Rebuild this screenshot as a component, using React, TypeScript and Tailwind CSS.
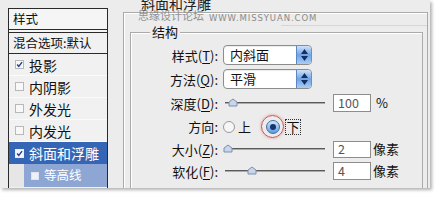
const FONT = { fontFamily: '"Noto Sans CJK SC", "Noto Sans", sans-serif' };

const CheckBox = ({ checked, light }: { checked?: boolean; light?: boolean }) => (
  <span
    className={
      "w-[9px] h-[9px] shrink-0 border flex items-center justify-center " +
      (light ? "border-[#e8eef8] bg-[#f4f6fb]" : "border-[#b8b8b8] bg-[#f8f8f8]")
    }
  >
    {checked && (
      <svg width="9" height="9" viewBox="0 0 9 9">
        <path d="M1.5 4.5 L3.6 7 L7.8 1.5" stroke="#1d3f8f" strokeWidth="1.8" fill="none" />
      </svg>
    )}
  </span>
);

const ListRow = ({ label, checked }: { label: string; checked?: boolean }) => (
  <div className="h-[22px] flex items-center gap-[5px] pl-[6px] border-b border-[#fafafa] text-[14px] text-[#111]">
    <CheckBox checked={checked} />
    <span className="leading-none">{label}</span>
  </div>
);

const LeftList = () => (
  <div className="ml-[8px] mt-[8px] w-[100px] h-[200px] border-[1.5px] border-[#2a2a2a] bg-[#f1f1f1] flex flex-col shrink-0">
    <div className="h-[21px] flex items-center pl-[4px] text-[12.5px] text-[#111] bg-[#f5f5f5] border-b-[1.5px] border-[#2a2a2a]">
      样式
    </div>
    <div className="h-[2px] bg-[#f5f5f5]" />
    <div className="h-[22px] flex items-center pl-[4px] text-[12.5px] text-[#111] border-t-[1.5px] border-b-[1.5px] border-[#2a2a2a]">
      混合选项:默认
    </div>
    <ListRow label="投影" checked />
    <ListRow label="内阴影" />
    <ListRow label="外发光" />
    <ListRow label="内发光" />
    <div className="h-[22px] flex items-center gap-[5px] pl-[6px] bg-[#3566b6] text-[14px] text-white">
      <CheckBox checked light />
      <span className="leading-none">斜面和浮雕</span>
    </div>
    <div className="h-[23px] flex items-center pl-[15px] bg-[#e6e6e6]">
      <div className="h-full flex-1 flex items-center gap-[5px] pl-[7px] bg-[#8ea6d4] text-[12.5px] text-white">
        <span className="w-[8px] h-[8px] bg-[#eef1f8] border border-[#dde3f0]" />
        <span className="leading-none">等高线</span>
      </div>
    </div>
  </div>
);

const Label = ({ text, k, rest }: { text: string; k?: string; rest?: string }) => (
  <span className="w-[87px] shrink-0 text-right text-[13px] text-[#111] leading-none whitespace-nowrap">
    {text}
    {k && (
      <>
        (<u className="underline-offset-2">{k}</u>)
      </>
    )}
    {rest ?? ":"}
  </span>
);

const Dropdown = ({ value }: { value: string }) => (
  <div className="w-[89px] h-[20px] flex border border-[#8c8c8c] rounded-[4px] bg-white overflow-hidden shadow-[inset_0_1px_1px_rgba(0,0,0,0.08)]">
    <span className="flex-1 pl-[6px] text-[13px] leading-[18px] text-[#111]">{value}</span>
    <span className="w-[15px] h-full flex flex-col items-center justify-center gap-[2px] bg-gradient-to-b from-[#cfe2fa] via-[#6fa3e6] to-[#a9cdf6] border-l border-[#5d87c2] rounded-r-[3px]">
      <svg width="7" height="5" viewBox="0 0 7 5">
        <path d="M3.5 0 L7 5 L0 5 Z" fill="#15305e" />
      </svg>
      <svg width="7" height="5" viewBox="0 0 7 5">
        <path d="M0 0 L7 0 L3.5 5 Z" fill="#15305e" />
      </svg>
    </span>
  </div>
);

const Slider = ({ pos }: { pos: number }) => (
  <div className="relative w-[102px] h-[12px] shrink-0">
    <div className="absolute left-[2px] right-0 top-[5px] h-[2px] bg-[#5a5a5a] border-b border-[#ababab]" />
    <svg
      className="absolute top-[1px]"
      style={{ left: pos }}
      width="10"
      height="9"
      viewBox="0 0 10 9"
    >
      <path d="M1 8 L1 4 L5 1 L9 4 L9 8 Z" fill="#c9d6ea" stroke="#7d8fae" strokeWidth="1" />
    </svg>
  </div>
);

const NumBox = ({ value, h = 18 }: { value: string; h?: number }) => (
  <div
    className="w-[38px] border border-[#8d8d8d] bg-white pl-[4px] text-[12.5px] text-[#555] flex items-center shrink-0"
    style={{ height: h }}
  >
    {value}
  </div>
);

const Radio = ({ selected }: { selected?: boolean }) =>
  selected ? (
    <span className="w-[14px] h-[14px] rounded-full bg-gradient-to-b from-[#d5e8fb] to-[#5b9be0] border border-[#416fa8] flex items-center justify-center">
      <span className="w-[6px] h-[6px] rounded-full bg-[#17356b]" />
    </span>
  ) : (
    <span className="w-[12px] h-[12px] rounded-full bg-[#f6f6f6] border border-[#9a9a9a]" />
  );

const App = () => {
  return (
    <div className="w-[438px] h-[200px] bg-white overflow-hidden" style={FONT}>
      <div className="w-[430px] h-[188px] bg-[#ececec] shadow-[2px_2px_3px_rgba(0,0,0,0.3)] flex items-start overflow-hidden relative">
        <LeftList />

        <div className="ml-[15px] mt-[12px] w-[305px] h-[200px] border-l border-t border-r border-[#aaaaaa] shadow-[inset_1px_1px_0_#ffffff] relative shrink-0">
          <span className="absolute left-[16px] -top-[18px] px-[1px] bg-[#ececec] text-[14px] leading-[16px] text-[#222]">
            斜面和浮雕
          </span>
          {/* watermark */}
          <span className="absolute left-[14px] -top-[4px] text-[11px] leading-[12px] text-[#7c7c7c] opacity-80 whitespace-nowrap">
            思缘设计论坛
          </span>
          <span
            className="absolute left-[85px] top-[0px] text-[8.5px] leading-[10px] tracking-[0.9px] text-[#8a8a8a] whitespace-nowrap"
            style={{ fontFamily: '"DejaVu Sans", sans-serif' }}
          >
            WWW.MISSYUAN.COM
          </span>
          <div className="absolute left-[157px] right-0 top-[12px] h-px bg-[#d6d6d6]" />

          <div className="ml-[6px] mt-[19px] w-[293px] h-[200px] border-l border-t border-r border-[#aaaaaa] shadow-[inset_1px_1px_0_#ffffff] relative">
            <span className="absolute left-[19px] -top-[9px] px-[2px] bg-[#ececec] text-[13px] leading-[16px] text-[#111]">
              结构
            </span>

            <div className="pt-[10px] flex flex-col">
              <div className="h-[24px] flex items-center gap-[5px]">
                <Label text="样式" k="T" />
                <Dropdown value="内斜面" />
              </div>
              <div className="h-[24px] flex items-center gap-[5px]">
                <Label text="方法" k="Q" />
                <Dropdown value="平滑" />
              </div>
              <div className="h-[24px] flex items-center gap-[5px]">
                <Label text="深度" k="D" />
                <div className="flex items-center">
                  <Slider pos={5} />
                  <span className="w-[8px]" />
                  <NumBox value="100" />
                  <span className="ml-[5px] text-[13px] text-[#111]">%</span>
                </div>
              </div>
              <div className="h-[23px] flex items-center gap-[5px]">
                <Label text="方向" />
                <div className="flex items-center">
                  <Radio />
                  <span className="ml-[3px] text-[13px] leading-none text-[#111]">上</span>
                  <span className="ml-[10px] w-[23px] h-[23px] rounded-full border border-[#d25050] shadow-[0_0_3px_rgba(220,80,80,0.5)] flex items-center justify-center">
                    <Radio selected />
                  </span>
                  <span className="ml-[1px] px-[0.5px] border border-dotted border-[#333] text-[13px] leading-[14px] text-[#111]">
                    下
                  </span>
                </div>
              </div>
              <div className="h-[22px] flex items-center gap-[5px]">
                <Label text="大小" k="Z" />
                <div className="flex items-center">
                  <Slider pos={0} />
                  <span className="w-[8px]" />
                  <NumBox value="2" h={17} />
                  <span className="ml-[2px] text-[13px] text-[#111]">像素</span>
                </div>
              </div>
              <div className="h-[22px] flex items-center gap-[5px]">
                <Label text="软化" k="F" />
                <div className="flex items-center">
                  <Slider pos={24} />
                  <span className="w-[8px]" />
                  <NumBox value="4" />
                  <span className="ml-[2px] text-[13px] text-[#111]">像素</span>
                </div>
              </div>
            </div>
          </div>
        </div>
      </div>
    </div>
  );
};

export default App;
